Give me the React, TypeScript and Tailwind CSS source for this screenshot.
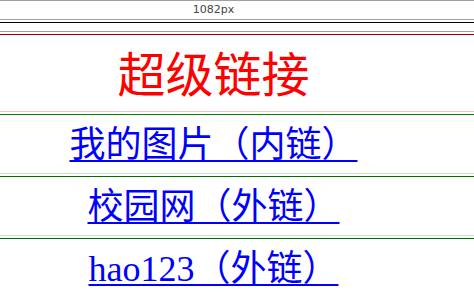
import React from 'react';

const links = [
  { label: '我的图片（内链）', href: '#pic' },
  { label: '校园网（外链）', href: '#school' },
  { label: 'hao123（外链）', href: '#hao123' },
];

export default function App() {
  return (
    <div className="w-[474px] h-[294px] overflow-hidden bg-white">
      {/* ruler */}
      <div className="h-[20px] border-y border-[#a0a0a0]">
        <div className="w-[427px] text-center text-[11px] leading-[18px] text-[#444] font-['DejaVu_Sans',sans-serif]">
          1082px
        </div>
      </div>
      <div className="h-[2px]" />
      <div className="h-px bg-black" />
      <div className="h-[8px]" />
      <div className="h-px bg-[#a0a0a0]" />
      <div className="h-[2px]" />
      <div className="h-px bg-[#a00000]" />

      {/* title */}
      <div className="h-[76px] pt-[12px]">
        <h1 className="w-[427px] text-center text-[48px] leading-[48px] text-[#ff0000] font-['Noto_Sans_CJK_SC',sans-serif]">
          超级链接
        </h1>
      </div>

      {links.map((link, i) => (
        <React.Fragment key={link.href}>
          {i === 0 ? (
            <div className="h-[4px] border-t border-b border-t-[#f4c4c4] border-b-[#008000]" />
          ) : (
            <div className="h-[4px] border-t border-b border-t-[#c4e8c4] border-b-[#007000]" />
          )}
          <div className="h-[58px] pt-[12px]">
            <div className="w-[427px] text-center text-[36px] leading-[36px] font-['Liberation_Serif','Noto_Sans_CJK_SC',serif]">
              <a
                href={link.href}
                className="text-[#0000ff] underline decoration-2 underline-offset-[3px]"
              >
                {link.label}
              </a>
            </div>
          </div>
        </React.Fragment>
      ))}
    </div>
  );
}
